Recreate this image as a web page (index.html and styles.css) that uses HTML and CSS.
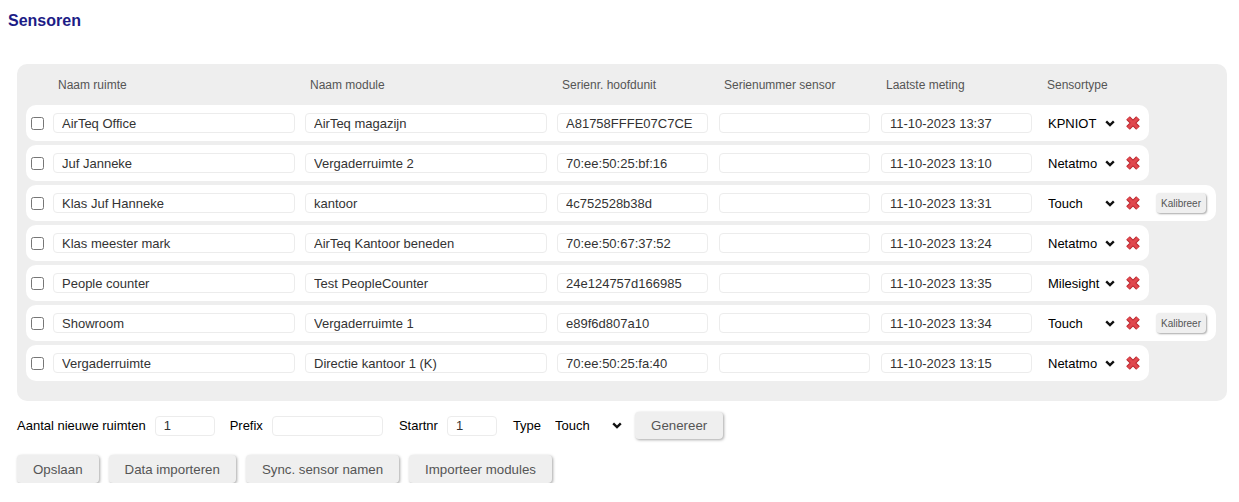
FILE: index.html
```html
<!DOCTYPE html>
<html lang="nl">
<head>
    <meta charset="UTF-8">
    <meta name="viewport" content="width=device-width, initial-scale=1.0">
    <title>Sensoren</title>
    <link rel="stylesheet" href="styles.css">
</head>
<body>
    <h1 class="title">Sensoren</h1>

    <div class="content">
        <div class="panel">
            <div class="row head">
                <span class="check-space"></span>
                <span class="col wide">Naam ruimte</span>
                <span class="col wide">Naam module</span>
                <span class="col">Serienr. hoofdunit</span>
                <span class="col narrow">Serienummer sensor</span>
                <span class="col narrow">Laatste meting</span>
                <span class="col type-col">Sensortype</span>
            </div>

            <div class="row">
                <input type="checkbox" class="check">
                <input type="text" class="field wide" value="AirTeq Office">
                <input type="text" class="field wide" value="AirTeq magazijn">
                <input type="text" class="field" value="A81758FFFE07C7CE">
                <input type="text" class="field narrow" value="">
                <input type="text" class="field narrow" value="11-10-2023 13:37">
                <select class="type"><option>KPNIOT</option></select>
                <span class="remove"><svg width="14" height="14" viewBox="0 0 14 14"><path d="M2 2 L12 12 M12 2 L2 12" stroke="#b8252b" stroke-width="5.2"/><path d="M2.2 2.2 L11.8 11.8 M11.8 2.2 L2.2 11.8" stroke="#e0474d" stroke-width="3.2"/></svg></span>
            </div>

            <div class="row">
                <input type="checkbox" class="check">
                <input type="text" class="field wide" value="Juf Janneke">
                <input type="text" class="field wide" value="Vergaderruimte 2">
                <input type="text" class="field" value="70:ee:50:25:bf:16">
                <input type="text" class="field narrow" value="">
                <input type="text" class="field narrow" value="11-10-2023 13:10">
                <select class="type"><option>Netatmo</option></select>
                <span class="remove"><svg width="14" height="14" viewBox="0 0 14 14"><path d="M2 2 L12 12 M12 2 L2 12" stroke="#b8252b" stroke-width="5.2"/><path d="M2.2 2.2 L11.8 11.8 M11.8 2.2 L2.2 11.8" stroke="#e0474d" stroke-width="3.2"/></svg></span>
            </div>

            <div class="row">
                <input type="checkbox" class="check">
                <input type="text" class="field wide" value="Klas Juf Hanneke">
                <input type="text" class="field wide" value="kantoor">
                <input type="text" class="field" value="4c752528b38d">
                <input type="text" class="field narrow" value="">
                <input type="text" class="field narrow" value="11-10-2023 13:31">
                <select class="type"><option>Touch</option></select>
                <span class="remove"><svg width="14" height="14" viewBox="0 0 14 14"><path d="M2 2 L12 12 M12 2 L2 12" stroke="#b8252b" stroke-width="5.2"/><path d="M2.2 2.2 L11.8 11.8 M11.8 2.2 L2.2 11.8" stroke="#e0474d" stroke-width="3.2"/></svg></span>
                <button class="calibrate">Kalibreer</button>
            </div>

            <div class="row">
                <input type="checkbox" class="check">
                <input type="text" class="field wide" value="Klas meester mark">
                <input type="text" class="field wide" value="AirTeq Kantoor beneden">
                <input type="text" class="field" value="70:ee:50:67:37:52">
                <input type="text" class="field narrow" value="">
                <input type="text" class="field narrow" value="11-10-2023 13:24">
                <select class="type"><option>Netatmo</option></select>
                <span class="remove"><svg width="14" height="14" viewBox="0 0 14 14"><path d="M2 2 L12 12 M12 2 L2 12" stroke="#b8252b" stroke-width="5.2"/><path d="M2.2 2.2 L11.8 11.8 M11.8 2.2 L2.2 11.8" stroke="#e0474d" stroke-width="3.2"/></svg></span>
            </div>

            <div class="row">
                <input type="checkbox" class="check">
                <input type="text" class="field wide" value="People counter">
                <input type="text" class="field wide" value="Test PeopleCounter">
                <input type="text" class="field" value="24e124757d166985">
                <input type="text" class="field narrow" value="">
                <input type="text" class="field narrow" value="11-10-2023 13:35">
                <select class="type"><option>Milesight</option></select>
                <span class="remove"><svg width="14" height="14" viewBox="0 0 14 14"><path d="M2 2 L12 12 M12 2 L2 12" stroke="#b8252b" stroke-width="5.2"/><path d="M2.2 2.2 L11.8 11.8 M11.8 2.2 L2.2 11.8" stroke="#e0474d" stroke-width="3.2"/></svg></span>
            </div>

            <div class="row">
                <input type="checkbox" class="check">
                <input type="text" class="field wide" value="Showroom">
                <input type="text" class="field wide" value="Vergaderruimte 1">
                <input type="text" class="field" value="e89f6d807a10">
                <input type="text" class="field narrow" value="">
                <input type="text" class="field narrow" value="11-10-2023 13:34">
                <select class="type"><option>Touch</option></select>
                <span class="remove"><svg width="14" height="14" viewBox="0 0 14 14"><path d="M2 2 L12 12 M12 2 L2 12" stroke="#b8252b" stroke-width="5.2"/><path d="M2.2 2.2 L11.8 11.8 M11.8 2.2 L2.2 11.8" stroke="#e0474d" stroke-width="3.2"/></svg></span>
                <button class="calibrate">Kalibreer</button>
            </div>

            <div class="row">
                <input type="checkbox" class="check">
                <input type="text" class="field wide" value="Vergaderruimte">
                <input type="text" class="field wide" value="Directie kantoor 1 (K)">
                <input type="text" class="field" value="70:ee:50:25:fa:40">
                <input type="text" class="field narrow" value="">
                <input type="text" class="field narrow" value="11-10-2023 13:15">
                <select class="type"><option>Netatmo</option></select>
                <span class="remove"><svg width="14" height="14" viewBox="0 0 14 14"><path d="M2 2 L12 12 M12 2 L2 12" stroke="#b8252b" stroke-width="5.2"/><path d="M2.2 2.2 L11.8 11.8 M11.8 2.2 L2.2 11.8" stroke="#e0474d" stroke-width="3.2"/></svg></span>
            </div>
        </div>

        <div class="generate">
            <label class="gen-label">Aantal nieuwe ruimten</label>
            <input type="text" class="field count" value="1">
            <label class="gen-label">Prefix</label>
            <input type="text" class="field prefix" value="">
            <label class="gen-label">Startnr</label>
            <input type="text" class="field start" value="1">
            <label class="gen-label">Type</label>
            <select class="type gen-type"><option>Touch</option></select>
            <button class="btn">Genereer</button>
        </div>

        <div class="actions">
            <button class="btn">Opslaan</button>
            <button class="btn">Data importeren</button>
            <button class="btn">Sync. sensor namen</button>
            <button class="btn">Importeer modules</button>
        </div>
    </div>
</body>
</html>
```

FILE: styles.css
```css
body {
    margin: 8px;
    font-family: "Liberation Sans", Arial, sans-serif;
    font-size: 13px;
    color: #000;
    background: #fff;
}
.title {
    margin: 3px 0 0 0;
    font-size: 16px;
    line-height: 20px;
    font-weight: bold;
    color: #1c1c86;
}
.content {
    padding-left: 9px;
}
.panel {
    width: 1210px;
    box-sizing: border-box;
    margin-top: 33px;
    padding: 4px 0 16px 9px;
    background-color: #eeeeee;
    border-radius: 10px;
}
.row {
    display: flex;
    align-items: center;
    width: fit-content;
    height: 36px;
    box-sizing: border-box;
    padding: 0 9px 0 5px;
    margin-bottom: 4px;
    background-color: #fff;
    border-radius: 10px;
}
.row.head {
    height: 33px;
    background-color: transparent;
    color: #555;
    font-size: 12px;
}
.check, .check-space {
    width: 13px;
    height: 13px;
    margin: 0;
    flex: none;
}
.field {
    height: 20px;
    box-sizing: border-box;
    border: 1px solid #ececec;
    border-radius: 4px;
    padding: 0 8px;
    font-family: "Liberation Sans", Arial, sans-serif;
    font-size: 13px;
    color: #333;
    background: #fff;
    outline: none;
}
.row .field, .row .col {
    width: 151px;
    margin-left: 11px;
    box-sizing: border-box;
}
.row .col {
    padding-left: 5px;
}
.row .wide {
    width: 242px;
    margin-left: 10px;
}
.row .wide:nth-child(2) {
    margin-left: 9px;
}
.row .col.type-col {
    width: auto;
    margin-left: 15px;
    padding-left: 0;
}
.row .field:nth-child(4), .row .col:nth-child(4) {
    margin-left: 10px;
}
.type {
    -webkit-appearance: none;
    appearance: none;
    width: 72px;
    height: 20px;
    border: none;
    padding: 0 0 0 1px;
    font-family: "Liberation Sans", Arial, sans-serif;
    font-size: 13px;
    color: #000;
    background: transparent url("data:image/svg+xml,%3Csvg xmlns='http://www.w3.org/2000/svg' width='10' height='7' viewBox='0 0 10 7'%3E%3Cpath d='M1.2 1.4 L5 5 L8.8 1.4' fill='none' stroke='%23111' stroke-width='2.4'/%3E%3C/svg%3E") no-repeat right 4px center;
    outline: none;
}
.row .type {
    margin-left: 15px;
}
.remove {
    display: flex;
    margin-left: 7px;
}
.calibrate {
    width: 50px;
    height: 20px;
    margin-left: 16px;
    margin-right: 1px;
    padding: 0;
    border: none;
    border-radius: 4px;
    background-color: #efefef;
    box-shadow: 1px 1px 2px rgba(0, 0, 0, 0.35);
    font-family: "Liberation Sans", Arial, sans-serif;
    font-size: 10px;
    color: #555;
}
.generate {
    display: flex;
    align-items: center;
    height: 27px;
    margin-top: 11px;
}
.gen-label {
    margin-right: 9px;
}
.count {
    width: 60px;
    margin-right: 15px;
}
.prefix {
    width: 111px;
    margin-right: 16px;
}
.start {
    width: 50px;
    margin-right: 16px;
}
.gen-type {
    margin-left: 4px;
    margin-right: 9px;
}
.btn {
    height: 27px;
    padding: 0 16px;
    border: none;
    border-radius: 4px;
    background-color: #efefef;
    box-shadow: 1px 1px 3px rgba(0, 0, 0, 0.35);
    font-family: "Liberation Sans", Arial, sans-serif;
    font-size: 13.3px;
    color: #555;
    cursor: pointer;
}
.actions {
    display: flex;
    gap: 10px;
    margin-top: 16px;
}
.actions .btn {
    height: 28px;
}
```
